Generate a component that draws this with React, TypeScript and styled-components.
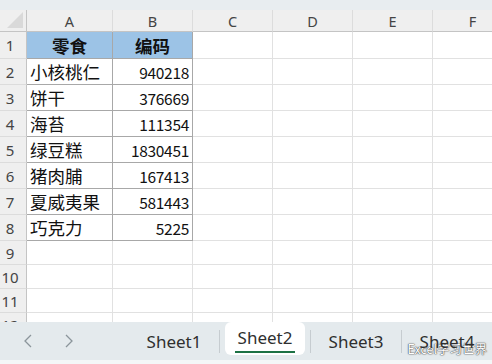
import styled, { createGlobalStyle } from "styled-components"

const GlobalStyle = createGlobalStyle`
    html, body {
        margin: 0;
        padding: 0;
        background: #ffffff;
    }
    * {
        box-sizing: border-box;
    }
`

const Page = styled.div`
    position: relative;
    width: 492px;
    height: 364px;
    display: flex;
    flex-direction: column;
    overflow: hidden;
    background: #ffffff;
    font-family: "Noto Sans CJK SC", "Noto Sans", sans-serif;
`

const TopBand = styled.div`
    height: 10px;
    flex: none;
    background: #e8edf0;
`

const Sheet = styled.div`
    flex: 1;
    overflow: hidden;
    display: grid;
    grid-template-columns: 27px 86px 80px 80px 80px 80px 80px;
    grid-template-rows: 22px 27px repeat(7, 26px) repeat(5, 24px);
    align-content: start;
`

const Corner = styled.div`
    position: relative;
    background: #efefef;
    border-right: 1px solid #c4c4c4;
    border-bottom: 1px solid #c4c4c4;

    &::after {
        content: "";
        position: absolute;
        right: 3px;
        bottom: 3px;
        width: 16px;
        height: 16px;
        background: #d9d9d9;
        clip-path: polygon(100% 0, 100% 100%, 0 100%);
    }
`

const ColHead = styled.div`
    display: flex;
    align-items: center;
    justify-content: center;
    background: #efefef;
    border-right: 1px solid #dcdcdc;
    border-bottom: 1px solid #c4c4c4;
    color: #444;
    font-family: "Noto Sans", "Liberation Sans", sans-serif;
    font-size: 14.5px;
    padding-top: 1px;
`

const RowHead = styled.div`
    display: flex;
    align-items: center;
    justify-content: center;
    padding-right: 6px;
    background: #efefef;
    border-right: 1px solid #c4c4c4;
    border-bottom: 1px solid #dcdcdc;
    color: #444;
    font-family: "Noto Sans", "Liberation Sans", sans-serif;
    font-size: 15px;
`

type Kind = "head" | "text" | "num" | "empty"

const Cell = styled.div<{ $kind: Kind }>`
    display: flex;
    align-items: center;
    padding: 0 3px;
    white-space: nowrap;
    overflow: hidden;
    color: #111;
    border-right: 1px solid ${p => (p.$kind === "empty" ? "#e1e1e1" : "#a8a8a8")};
    border-bottom: 1px solid ${p => (p.$kind === "empty" ? "#e1e1e1" : "#a8a8a8")};
    background: ${p => (p.$kind === "head" ? "#9cc3e6" : "#ffffff")};
    justify-content: ${p =>
        p.$kind === "head" ? "center" : p.$kind === "num" ? "flex-end" : "flex-start"};
    font-size: ${p => (p.$kind === "num" ? "15.5px" : "17.5px")};
    font-weight: ${p => (p.$kind === "head" ? 700 : 400)};
    letter-spacing: ${p => (p.$kind === "num" ? "-0.3px" : "0")};
`

const TabBar = styled.div`
    flex: none;
    height: 38px;
    display: flex;
    align-items: stretch;
    background: #e4eaed;
    font-family: "Noto Sans", "Open Sans", sans-serif;
`

const NavArea = styled.div`
    width: 129px;
    flex: none;
    display: flex;
    align-items: center;
    gap: 33px;
    padding-left: 24px;
    color: #8b959b;
`

const Tab = styled.div<{ $active?: boolean }>`
    width: 90px;
    flex: none;
    position: relative;
    display: flex;
    align-items: center;
    justify-content: center;
    font-size: 17px;
    color: #2f2f2f;
    ${p =>
        p.$active &&
        `
        margin-bottom: 5px;
        padding-bottom: 3px;
        &::before {
            content: "";
            position: absolute;
            inset: 0 5px;
            background: #ffffff;
            border-radius: 6px;
        }
        &::after {
            content: "";
            position: absolute;
            left: 15px;
            right: 15px;
            bottom: 2px;
            height: 2.5px;
            background: #1d7245;
        }
    `}
`

const TabLabel = styled.span`
    position: relative;
    z-index: 1;
`

const Separator = styled.div`
    width: 1px;
    flex: none;
    align-self: center;
    height: 23px;
    background: #c6ccd0;
`

const BottomStrip = styled.div`
    flex: none;
    height: 4px;
    background: #f4f6f7;
`

const Watermark = styled.div`
    position: absolute;
    right: 5px;
    bottom: 6px;
    font-family: "Noto Sans CJK SC", sans-serif;
    font-size: 12.5px;
    color: #ffffff;
    text-shadow: 0 0 1px #4a4a4a, 0 0 1px #4a4a4a, 0 0 2px #777;
`

const Chevron = ({ dir }: { dir: "left" | "right" }) => (
    <svg width="8" height="14" viewBox="0 0 8 14" fill="none">
        <polyline
            points={dir === "left" ? "7,1 1,7 7,13" : "1,1 7,7 1,13"}
            stroke="currentColor"
            strokeWidth="1.3"
        />
    </svg>
)

const columns = ["A", "B", "C", "D", "E", "F"]

const data: [string, string][] = [
    ["小核桃仁", "940218"],
    ["饼干", "376669"],
    ["海苔", "111354"],
    ["绿豆糕", "1830451"],
    ["猪肉脯", "167413"],
    ["夏威夷果", "581443"],
    ["巧克力", "5225"],
]

export default function App() {
    const rows = []
    rows.push(
        <RowHead key="r1">1</RowHead>,
        <Cell key="a1" $kind="head">零食</Cell>,
        <Cell key="b1" $kind="head">编码</Cell>,
        ...[0, 1, 2, 3].map(i => <Cell key={`e1-${i}`} $kind="empty" />)
    )
    data.forEach(([name, code], i) => {
        const n = i + 2
        rows.push(
            <RowHead key={`r${n}`}>{n}</RowHead>,
            <Cell key={`a${n}`} $kind="text">{name}</Cell>,
            <Cell key={`b${n}`} $kind="num">{code}</Cell>,
            ...[0, 1, 2, 3].map(j => <Cell key={`e${n}-${j}`} $kind="empty" />)
        )
    })
    for (let n = 9; n <= 13; n++) {
        rows.push(
            <RowHead key={`r${n}`}>{n}</RowHead>,
            ...[0, 1, 2, 3, 4, 5].map(j => <Cell key={`e${n}-${j}`} $kind="empty" />)
        )
    }

    return (
        <>
            <GlobalStyle />
            <Page>
                <TopBand />
                <Sheet>
                    <Corner />
                    {columns.map(c => (
                        <ColHead key={c}>{c}</ColHead>
                    ))}
                    {rows}
                </Sheet>
                <TabBar>
                    <NavArea>
                        <Chevron dir="left" />
                        <Chevron dir="right" />
                    </NavArea>
                    <Tab><TabLabel>Sheet1</TabLabel></Tab>
                    <Separator />
                    <Tab $active><TabLabel>Sheet2</TabLabel></Tab>
                    <Separator />
                    <Tab><TabLabel>Sheet3</TabLabel></Tab>
                    <Separator />
                    <Tab><TabLabel>Sheet4</TabLabel></Tab>
                </TabBar>
                <BottomStrip />
                <Watermark>Excel学习世界</Watermark>
            </Page>
        </>
    )
}
